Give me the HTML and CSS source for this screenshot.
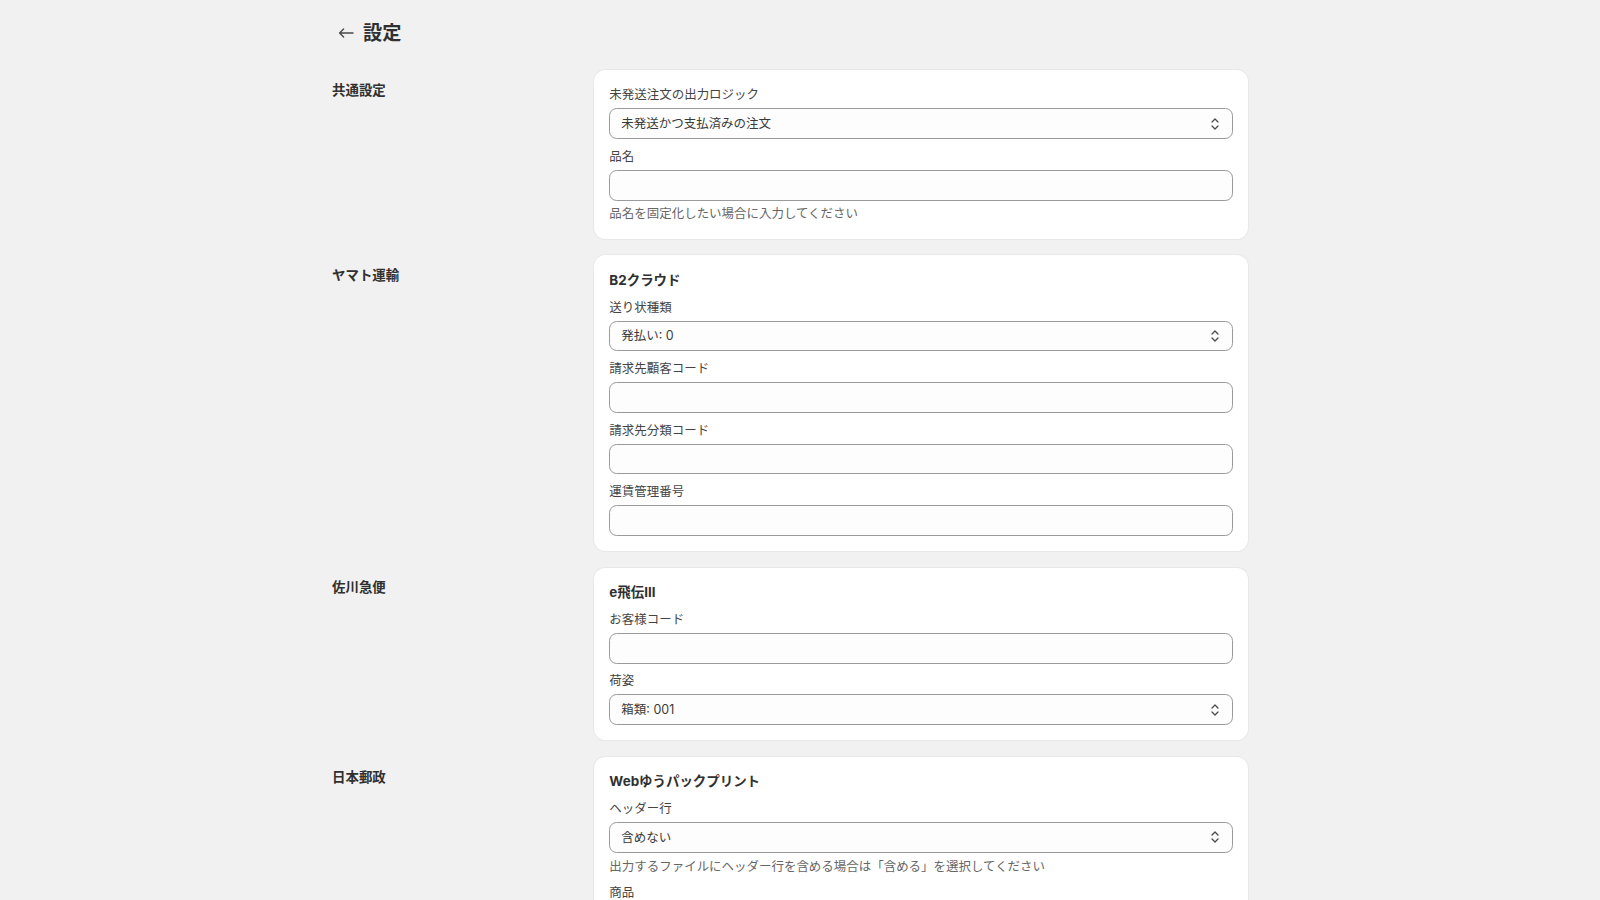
FILE: index.html
```html
<!DOCTYPE html>
<html lang="ja">
<head>
<meta charset="utf-8">
<title>設定</title>
<link rel="stylesheet" href="styles.css">
</head>
<body>
<div class="page">
  <header class="page-header">
    <button class="back" type="button" aria-label="戻る">
      <svg viewBox="0 0 20 20" width="20" height="20"><path d="M17 10H3.6M7.6 6.1L3.6 10l4 3.9" fill="none" stroke="#4a4a4a" stroke-width="1.4" stroke-linecap="round" stroke-linejoin="round"/></svg>
    </button>
    <h1 class="page-title">設定</h1>
  </header>

  <div class="sections">
    <section class="section">
      <div class="annotation"><h2>共通設定</h2></div>
      <div class="card">
        <div class="field">
          <label class="label">未発送注文の出力ロジック</label>
          <div class="select"><span>未発送かつ支払済みの注文</span><svg class="chev" viewBox="0 0 12 14" width="12" height="14"><path d="M3 5l3-3 3 3M3 9l3 3 3-3" fill="none" stroke="#4a4a4a" stroke-width="1.3" stroke-linecap="round" stroke-linejoin="round"/></svg></div>
        </div>
        <div class="field">
          <label class="label">品名</label>
          <div class="input"></div>
          <p class="help">品名を固定化したい場合に入力してください</p>
        </div>
      </div>
    </section>

    <section class="section">
      <div class="annotation"><h2>ヤマト運輸</h2></div>
      <div class="card">
        <h3 class="card-title">B2クラウド</h3>
        <div class="field">
          <label class="label">送り状種類</label>
          <div class="select"><span>発払い: 0</span><svg class="chev" viewBox="0 0 12 14" width="12" height="14"><path d="M3 5l3-3 3 3M3 9l3 3 3-3" fill="none" stroke="#4a4a4a" stroke-width="1.3" stroke-linecap="round" stroke-linejoin="round"/></svg></div>
        </div>
        <div class="field">
          <label class="label">請求先顧客コード</label>
          <div class="input"></div>
        </div>
        <div class="field">
          <label class="label">請求先分類コード</label>
          <div class="input"></div>
        </div>
        <div class="field">
          <label class="label">運賃管理番号</label>
          <div class="input"></div>
        </div>
      </div>
    </section>

    <section class="section">
      <div class="annotation"><h2>佐川急便</h2></div>
      <div class="card">
        <h3 class="card-title">e飛伝III</h3>
        <div class="field">
          <label class="label">お客様コード</label>
          <div class="input"></div>
        </div>
        <div class="field">
          <label class="label">荷姿</label>
          <div class="select"><span>箱類: 001</span><svg class="chev" viewBox="0 0 12 14" width="12" height="14"><path d="M3 5l3-3 3 3M3 9l3 3 3-3" fill="none" stroke="#4a4a4a" stroke-width="1.3" stroke-linecap="round" stroke-linejoin="round"/></svg></div>
        </div>
      </div>
    </section>

    <section class="section">
      <div class="annotation"><h2>日本郵政</h2></div>
      <div class="card">
        <h3 class="card-title">Webゆうパックプリント</h3>
        <div class="field">
          <label class="label">ヘッダー行</label>
          <div class="select"><span>含めない</span><svg class="chev" viewBox="0 0 12 14" width="12" height="14"><path d="M3 5l3-3 3 3M3 9l3 3 3-3" fill="none" stroke="#4a4a4a" stroke-width="1.3" stroke-linecap="round" stroke-linejoin="round"/></svg></div>
          <p class="help">出力するファイルにヘッダー行を含める場合は「含める」を選択してください</p>
        </div>
        <div class="field">
          <label class="label">商品</label>
          <div class="input"></div>
        </div>
      </div>
    </section>
  </div>
</div>
</body>
</html>
```

FILE: styles.css
```css
* { box-sizing: border-box; }

html, body {
  margin: 0;
  padding: 0;
  background: #f1f1f1;
}

body {
  font-family: "Inter", "Noto Sans CJK JP", sans-serif;
  font-size: 12.48px;
  line-height: 19.2px;
  color: #303030;
}

.page {
  width: 936px;
  margin: 0 auto;
  padding: 19.5px 20px 40px 0;
}

.page-header {
  display: flex;
  align-items: center;
  height: 27px;
  margin-bottom: 23.5px;
}

.back {
  width: 27px;
  height: 27px;
  padding: 0;
  margin: 0 4px 0 0;
  border: 0;
  background: transparent;
  display: flex;
  align-items: center;
  justify-content: center;
}

.page-title {
  margin: 0;
  font-size: 19.2px;
  line-height: 27px;
  font-weight: 700;
  color: #303030;
}

.sections {
  display: flex;
  flex-direction: column;
  gap: 16.5px;
}

.section {
  display: grid;
  grid-template-columns: 242px 654px;
  column-gap: 20px;
  align-items: start;
}

.annotation h2 {
  margin: 0;
  padding-top: 10.8px;
  font-size: 13.44px;
  line-height: 19.2px;
  font-weight: 700;
  color: #303030;
}

.card {
  background: #ffffff;
  border-radius: 11.5px;
  box-shadow: 0 0 0 1px #e8e8e8, 0 1px 0 0 rgba(0, 0, 0, 0.05);
  padding: 15.36px 15.36px;
  display: flex;
  flex-direction: column;
  gap: 7.68px;
}

.card-title {
  margin: 0;
  font-size: 13.44px;
  line-height: 19.2px;
  font-weight: 700;
  color: #303030;
}

.field {
  display: flex;
  flex-direction: column;
}

.label {
  display: block;
  line-height: 19.2px;
  margin-bottom: 3.84px;
  color: #444444;
}

.select,
.input {
  height: 30.72px;
  border: 1px solid #9a9a9a;
  border-radius: 7.7px;
  background: #fdfdfd;
}

.select {
  display: flex;
  align-items: center;
  justify-content: space-between;
  padding: 0 11px 0 11px;
  color: #3a3a3a;
}

.chev {
  flex: none;
  display: block;
}

.help {
  margin: 3.84px 0 0;
  line-height: 19.2px;
  color: #666666;
}
```
